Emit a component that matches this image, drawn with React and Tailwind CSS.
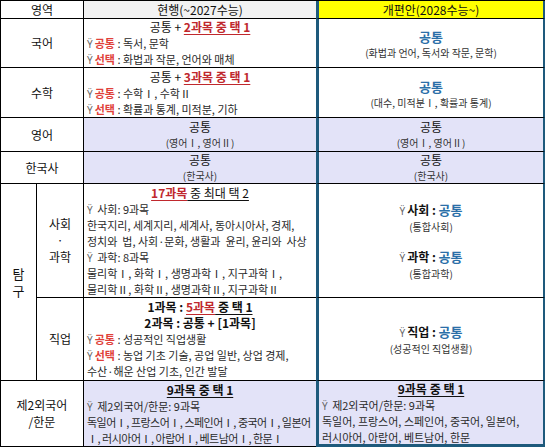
import React from "react";

const C = "border-r border-b border-black flex flex-col justify-center overflow-hidden";
const M = "border-b border-black flex flex-col justify-center overflow-hidden px-[3px]";
const R =
  "border-b border-black border-l-[3px] border-l-[#1e5a7c] border-r-[2px] border-r-[#1e5a7c] flex flex-col justify-center overflow-hidden";

function Dot({ className = "" }) {
  return <span className={"text-[#666] text-[10px] leading-none font-normal mr-[2px] " + className}>Ÿ</span>;
}

function Bul({ label, children }) {
  return (
    <div className="whitespace-nowrap leading-[16px] text-[11px] text-[#2a2a2a]">
      <Dot />
      {label && <span className="text-[#e0403a] font-semibold">{label}</span>}
      {children}
    </div>
  );
}

function Line({ children, className = "" }) {
  return (
    <div className={"whitespace-nowrap leading-[16px] text-[11px] text-[#2a2a2a] " + className}>
      {children}
    </div>
  );
}

function Head({ children }) {
  return (
    <div className="whitespace-nowrap text-center leading-[16px] text-[12px] text-[#111]">
      {children}
    </div>
  );
}

function Red({ children }) {
  return <span className="text-[#c0282d] font-bold underline underline-offset-2">{children}</span>;
}

function Blue({ children }) {
  return <span className="text-[#2b6fa8] text-[13px] leading-none font-semibold">{children}</span>;
}

function Paren({ children }) {
  return <div className="text-center text-[10px] leading-[15px] text-[#333] whitespace-nowrap">{children}</div>;
}

function Label({ children }) {
  return <div className="text-center text-[12px] leading-[16px] text-[#111]">{children}</div>;
}

export default function App() {
  return (
    <div className="w-[545px] h-[447px] bg-white overflow-hidden font-['Noto_Sans_CJK_KR','Noto_Sans',sans-serif] text-[#111]">
      <div className="grid grid-cols-[36px_47px_232px_229px] grid-rows-[18px_49px_50px_34px_32px_114px_83px_66px] border-t border-l border-black w-[545px]">
        {/* header */}
        <div className={C + " col-span-2"}>
          <Label>영역</Label>
        </div>
        <div className={M + " bg-[#f2f2f2]"}>
          <Label>현행(~2027수능)</Label>
        </div>
        <div className={R + " bg-[#ffff00]"}>
          <Label>개편안(2028수능~)</Label>
        </div>

        {/* 국어 */}
        <div className={C + " col-span-2"}>
          <Label>국어</Label>
        </div>
        <div className={M}>
          <Head>
            공통 + <Red>2과목 중 택 1</Red>
          </Head>
          <Bul label="공통"> : 독서, 문학</Bul>
          <Bul label="선택"> : 화법과 작문, 언어와 매체</Bul>
        </div>
        <div className={R}>
          <div className="text-center leading-[19px]"><Blue>공통</Blue></div>
          <Paren>(화법과 언어, 독서와 작문, 문학)</Paren>
        </div>

        {/* 수학 */}
        <div className={C + " col-span-2"}>
          <Label>수학</Label>
        </div>
        <div className={M}>
          <Head>
            공통 + <Red>3과목 중 택 1</Red>
          </Head>
          <Bul label="공통"> : 수학Ⅰ, 수학Ⅱ</Bul>
          <Bul label="선택"> : 확률과 통계, 미적분, 기하</Bul>
        </div>
        <div className={R}>
          <div className="text-center leading-[19px]"><Blue>공통</Blue></div>
          <Paren>(대수, 미적분Ⅰ, 확률과 통계)</Paren>
        </div>

        {/* 영어 */}
        <div className={C + " col-span-2"}>
          <Label>영어</Label>
        </div>
        <div className={M + " bg-[#e3e3f8]"}>
          <Label>공통</Label>
          <Paren>(영어Ⅰ, 영어Ⅱ)</Paren>
        </div>
        <div className={R + " bg-[#e3e3f8]"}>
          <Label>공통</Label>
          <Paren>(영어Ⅰ, 영어Ⅱ)</Paren>
        </div>

        {/* 한국사 */}
        <div className={C + " col-span-2"}>
          <Label>한국사</Label>
        </div>
        <div className={M + " bg-[#e3e3f8]"}>
          <Label>공통</Label>
          <Paren>(한국사)</Paren>
        </div>
        <div className={R + " bg-[#e3e3f8]"}>
          <Label>공통</Label>
          <Paren>(한국사)</Paren>
        </div>

        {/* 탐구 */}
        <div className={C + " row-span-2"}>
          <div className="text-center text-[13px] leading-[17px]">
            <div>탐</div>
            <div>구</div>
          </div>
        </div>
        <div className={C}>
          <div className="text-center text-[12px] leading-[16.5px]">
            <div>사회</div>
            <div>·</div>
            <div>과학</div>
          </div>
        </div>
        <div className={M}>
          <Head>
            <Red>17과목</Red>
            <span className="underline underline-offset-2"> 중 최대 택 2</span>
          </Head>
          <Bul> 사회: 9과목</Bul>
          <Line>한국지리, 세계지리, 세계사, 동아시아사, 경제,</Line>
          <Line>정치와&nbsp; 법, 사회·문화, 생활과&nbsp; 윤리, 윤리와&nbsp; 사상</Line>
          <Bul> 과학: 8과목</Bul>
          <Line>물리학Ⅰ, 화학Ⅰ, 생명과학Ⅰ, 지구과학Ⅰ,</Line>
          <Line>물리학Ⅱ, 화학Ⅱ, 생명과학Ⅱ, 지구과학Ⅱ</Line>
        </div>
        <div className={R + " items-center"}>
          <div className="leading-[18px] text-[12px] font-semibold text-center">
            <Dot className="mr-[1px]" />사회 : <Blue>공통</Blue>
          </div>
          <Paren>(통합사회)</Paren>
          <div className="h-[14px]" />
          <div className="leading-[18px] text-[12px] font-semibold text-center">
            <Dot className="mr-[1px]" />과학 : <Blue>공통</Blue>
          </div>
          <Paren>(통합과학)</Paren>
        </div>

        {/* 직업 */}
        <div className={C}>
          <Label>직업</Label>
        </div>
        <div className={M}>
          <Head>
            <span className="font-semibold">1과목 : </span>
            <Red>5과목</Red>
            <span className="underline underline-offset-2 font-semibold"> 중 택 1</span>
          </Head>
          <Head>
            <span className="font-semibold">2과목 : 공통 + [1과목]</span>
          </Head>
          <Bul label="공통"> : 성공적인 직업생활</Bul>
          <Bul label="선택"> : 농업 기초 기술, 공업 일반, 상업 경제,</Bul>
          <Line>수산·해운 산업 기초, 인간 발달</Line>
        </div>
        <div className={R + " items-center"}>
          <div className="leading-[18px] text-[12px] font-semibold text-center">
            <Dot className="mr-[1px]" />직업 : <Blue>공통</Blue>
          </div>
          <Paren>(성공적인 직업생활)</Paren>
        </div>

        {/* 제2외국어 */}
        <div className={C + " col-span-2"}>
          <div className="text-center text-[12px] leading-[16.5px]">
            <div>제2외국어</div>
            <div>/한문</div>
          </div>
        </div>
        <div className={M + " bg-[#e3e3f8]"}>
          <Head>
            <span className="underline underline-offset-2 font-semibold">9과목 중 택 1</span>
          </Head>
          <Bul> 제2외국어/한문: 9과목</Bul>
          <Line className="tracking-[-0.5px]">독일어Ⅰ, 프랑스어Ⅰ, 스페인어Ⅰ, 중국어Ⅰ, 일본어</Line>
          <Line className="tracking-[-0.5px]">Ⅰ, 러시아어Ⅰ, 아랍어Ⅰ, 베트남어Ⅰ, 한문Ⅰ</Line>
        </div>
        <div className={R + " border-b-[3px] border-b-[#1e5a7c] bg-[#e3e3f8] px-[3px]"}>
          <Head>
            <span className="underline underline-offset-2 font-semibold">9과목 중 택 1</span>
          </Head>
          <Bul> 제2외국어/한문: 9과목</Bul>
          <Line>독일어, 프랑스어, 스페인어, 중국어, 일본어,</Line>
          <Line>러시아어, 아랍어, 베트남어, 한문</Line>
        </div>
      </div>
    </div>
  );
}
